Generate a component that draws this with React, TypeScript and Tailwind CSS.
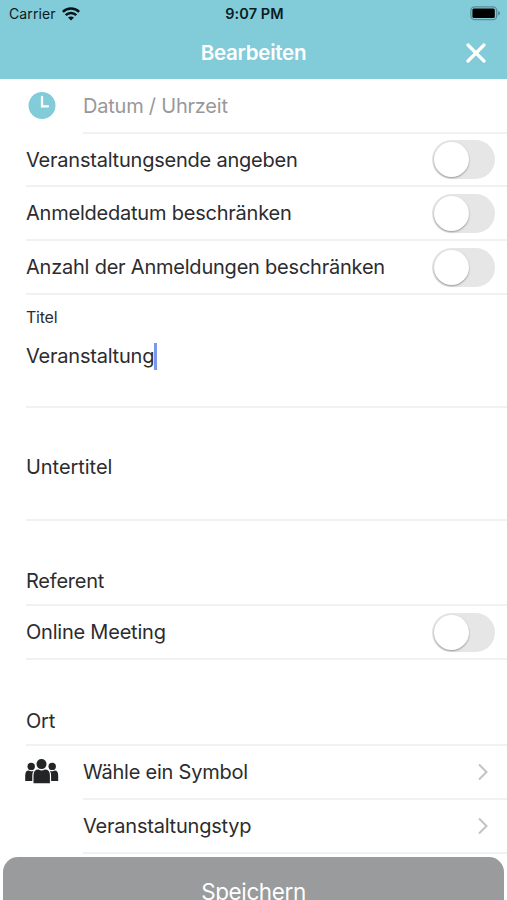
import clsx from "clsx";
import type { ReactNode } from "react";

type RowProps = {
  children?: ReactNode;
  className?: string;
}

// linha do formulario com divisor embaixo
const Row = ({ children, className }: RowProps) => (
  <div className={clsx("flex items-center border-b-2 border-[#f1f1f2]", className)}>
    {children}
  </div>
)

const Toggle = () => (
  <button
    type="button"
    role="switch"
    aria-checked={false}
    className="mr-3 ml-auto flex h-[39px] w-[63px] shrink-0 items-center rounded-full bg-[#e6e6e6] px-[2px]"
  >
    <span className="size-[35px] rounded-full bg-white shadow-[0_1px_2px_rgba(0,0,0,0.35)]" />
  </button>
)

const Chevron = () => (
  <svg className="mr-[18px] ml-auto" width="12" height="18" viewBox="0 0 12 18" fill="none" stroke="#c2c2c4" strokeWidth="2">
    <path d="M2 1.5 9.5 9 2 16.5" />
  </svg>
)

const WifiIcon = () => (
  <svg width="18" height="14" viewBox="0 0 18 14" fill="none" stroke="#061418" strokeWidth="2.5">
    <path d="M.8 4.9C5.3.3 12.7.3 17.2 4.9" />
    <path d="M3.7 8.2C6.7 5.3 11.3 5.3 14.3 8.2" />
    <path d="M6 10.6Q9 8.2 12 10.6L9 13.6Z" fill="#061418" stroke="none" />
  </svg>
)

const BatteryIcon = () => (
  <svg width="30" height="15" viewBox="0 0 30 15" fill="none">
    <rect x=".9" y=".9" width="25.8" height="12.8" rx="3.8" stroke="#568e9a" strokeWidth="1.3" />
    <rect x="2.4" y="2.6" width="22.4" height="9.4" rx="1.5" fill="#000" />
    <path d="M28 5Q30 5.6 30 7.3T28 9.6Z" fill="#568e9a" />
  </svg>
)

const ClockIcon = () => (
  <svg width="28" height="28" viewBox="0 0 28 28" fill="none">
    <circle cx="14" cy="13.5" r="13.5" fill="#82cbd9" />
    <path d="M14 5v9.3h6" stroke="#fff" strokeWidth="2.3" strokeLinecap="round" />
  </svg>
)

const GroupIcon = () => (
  <svg width="34" height="26" viewBox="0 0 34 26" fill="#222426">
    <circle cx="16.5" cy="5.1" r="5" />
    <path d="M8.5 24.3v-7.8q0-5.9 5-5.9 3.2 1.8 6.4 0 5 0 5 5.9v7.8Z" />
    <circle cx="6.2" cy="7.4" r="3.7" />
    <path d="M.2 22.1v-5.3q0-5.2 3.4-5.2 2.4 1.4 5 .2-1.3 1.7-1.3 5V22.1Z" />
    <circle cx="27.2" cy="7.4" r="3.7" />
    <path d="M33.2 22.1v-5.3q0-5.2-3.4-5.2-2.4 1.4-5 .2 1.3 1.7 1.3 5V22.1Z" />
  </svg>
)

export default function App() {
  return (
    <div className="flex h-[900px] w-[507px] flex-col overflow-hidden bg-white font-['Inter','Liberation_Sans',sans-serif] text-[20px] tracking-[-0.22px] whitespace-nowrap text-[#2c2c2e]">
      <header className="h-[79px] shrink-0 bg-[#82cbd9]">
        <div className="grid h-[27px] grid-cols-3 items-center pr-[7px] pl-[9px] text-[14px] tracking-[0.1px] text-[#0b1c20]">
          <div className="flex items-center gap-1.5">
            <span>Carrier</span>
            <WifiIcon />
          </div>
          <span className="text-center text-[14.5px] font-semibold">9:07 PM</span>
          <span className="justify-self-end"><BatteryIcon /></span>
        </div>
        <div className="grid h-[51px] grid-cols-[1fr_auto_1fr] items-center">
          <h1 className="col-start-2 pt-[2px] text-[20.5px] font-semibold tracking-[-0.25px] text-white">Bearbeiten</h1>
          <button type="button" aria-label="Close" className="mr-[21px] justify-self-end">
            <svg width="20" height="20" viewBox="0 0 20 20" stroke="#fff" strokeWidth="3.2" strokeLinecap="round">
              <path d="m2 2 16 16M18 2 2 18" />
            </svg>
          </button>
        </div>
      </header>

      <main className="flex flex-1 flex-col">
        <div className="flex h-[55px] shrink-0 pl-[28px]">
          <div className="flex w-[55px] items-center pb-[2px]"><ClockIcon /></div>
          <Row className="flex-1 text-[#98989a]">Datum / Uhrzeit</Row>
        </div>
        <Row className="ml-[26px] h-[53px]">Veranstaltungsende angeben<Toggle /></Row>
        <Row className="ml-[26px] h-[54px]">Anmeldedatum beschränken<Toggle /></Row>
        <Row className="ml-[26px] h-[54px]">Anzahl der Anmeldungen beschränken<Toggle /></Row>

        <div className="ml-[26px] h-[113px] border-b-2 border-[#f1f1f2] pt-[11px]">
          <div className="text-[16px] leading-[22px]">Titel</div>
          <div className="mt-[14px] flex h-7 items-center">
            Veranstaltung
            <span className="h-[27px] w-[2.5px] bg-[#7b98f0]" />
          </div>
        </div>
        <Row className="ml-[26px] h-[113px] pt-[7px] tracking-[-0.05px]">Untertitel</Row>
        <Row className="ml-[26px] h-[85px] pt-[37px]">Referent</Row>
        <Row className="ml-[26px] h-[54px]">Online Meeting<Toggle /></Row>
        <Row className="ml-[26px] h-[86px] pt-[37px]">Ort</Row>

        <div className="flex pl-[25px]">
          <div className="flex h-[54px] w-[58px] items-center pb-[2px]"><GroupIcon /></div>
          <div className="flex-1">
            <Row className="h-[54px]">Wähle ein Symbol<Chevron /></Row>
            <Row className="h-[54px]">Veranstaltungstyp<Chevron /></Row>
          </div>
        </div>
        <button type="button" className="mx-[3px] mt-[3px] h-[69px] shrink-0 rounded-[15px] bg-[#999b9c] text-[22.5px] tracking-[-0.4px] text-white">
          Speichern
        </button>
      </main>
    </div>
  )
}
